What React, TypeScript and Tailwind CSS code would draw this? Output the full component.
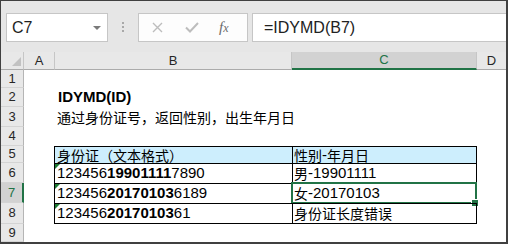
import React from "react";

const cjk = "text-[14px] font-['Noto_Sans_CJK_SC',sans-serif]";

const Zh = ({ children }: { children: React.ReactNode }) => (
  <span className={cjk}>{children}</span>
);

const ErrorMark = () => (
  <span className="absolute left-0 top-0 w-0 h-0 border-t-[5px] border-r-[5px] border-t-[#1e7b34] border-r-transparent" />
);

const Toolbar = () => (
  <div className="h-[51px] bg-[#e6e6e6] flex items-start pt-[12px] shrink-0">
    <div className="ml-[5px] w-[102px] h-[29px] border border-[#c6c6c6] bg-white flex items-center justify-between">
      <span className="pl-[5px] text-[16px] text-[#1f1f1f] leading-none">C7</span>
      <span className="mr-[6px] w-0 h-0 border-l-[4px] border-r-[4px] border-t-[4px] border-l-transparent border-r-transparent border-t-[#7a7a7a]" />
    </div>
    <div className="ml-[14px] mt-[9px] flex flex-col gap-[2px]">
      <span className="w-[2px] h-[2px] bg-[#a8a8a8]" />
      <span className="w-[2px] h-[2px] bg-[#a8a8a8]" />
      <span className="w-[2px] h-[2px] bg-[#a8a8a8]" />
    </div>
    <div className="ml-[14px] w-[110px] h-[29px] border border-[#c6c6c6] bg-[#fdfdfd] flex items-center">
      <svg className="ml-[13px]" width="11" height="11" viewBox="0 0 11 11">
        <path d="M1 1 L10 10 M10 1 L1 10" stroke="#bdbdbd" strokeWidth="1.4" fill="none" />
      </svg>
      <svg className="ml-[22px]" width="14" height="11" viewBox="0 0 14 11">
        <path d="M1 5.5 L5 9.5 L13 1" stroke="#bdbdbd" strokeWidth="2" fill="none" />
      </svg>
      <span className="ml-[20px] text-[15px] italic text-[#6b6b6b] font-['Liberation_Serif',serif] leading-none">
        f<span className="text-[12px]">x</span>
      </span>
    </div>
    <div className="ml-[4px] flex-1 h-[29px] border-t border-b border-l border-[#c6c6c6] bg-white flex items-center">
      <span className="pl-[11px] text-[16px] text-[#222] leading-none">=IDYMD(B7)</span>
    </div>
  </div>
);

const ColumnHeader = () => (
  <div className="h-[18px] flex bg-[#e8e8e8] text-[13px] text-[#262626] shrink-0">
    <div className="relative w-[23px] border-r border-b border-r-[#c6c6c6] border-b-[#ababab]">
      <span className="absolute left-[11px] top-[5px] w-0 h-0 border-b-[9px] border-l-[9px] border-b-[#c2c2c2] border-l-transparent" />
    </div>
    <div className="w-[31px] border-r border-b border-r-[#c6c6c6] border-b-[#ababab] flex items-center justify-center">A</div>
    <div className="w-[237px] border-r border-b border-r-[#c6c6c6] border-b-[#ababab] flex items-center justify-center">B</div>
    <div className="w-[185px] bg-[#d2d2d2] border-r border-b-2 border-r-[#c6c6c6] border-b-[#217346] text-[#217346] flex items-center justify-center">C</div>
    <div className="flex-1 border-b border-b-[#ababab] flex items-center justify-center">D</div>
  </div>
);

interface RowProps {
  n: number;
  h: string;
  selected?: boolean;
  b?: React.ReactNode;
  c?: React.ReactNode;
  table?: "head" | "body" | "last";
  mark?: boolean;
}

const Row = ({ n, h, selected, b, c, table, mark }: RowProps) => {
  const inTable = !!table;
  const bCls = inTable
    ? `border-l border-t border-black ${table === "last" ? "border-b" : ""} ${table === "head" ? "bg-[#cdeefd]" : ""}`
    : "border-l border-transparent";
  const cCls = inTable
    ? `border-l border-r border-t border-black ${table === "last" ? "border-b" : ""} ${table === "head" ? "bg-[#cdeefd]" : ""}`
    : "border-l border-r border-transparent";

  return (
    <div className={`${h} flex shrink-0`}>
      <div
        className={`w-[23px] flex items-center justify-center text-[13px] border-b border-b-[#d4d4d4] ${
          selected
            ? "bg-[#d2d2d2] border-r-2 border-r-[#217346] text-[#217346]"
            : "bg-[#e8e8e8] border-r border-r-[#b5b5b5] text-[#262626]"
        }`}
      >
        {n}
      </div>
      <div className="w-[30px]" />
      <div className={`relative w-[238px] flex items-center pl-[2px] whitespace-nowrap text-[15px] ${bCls}`}>
        {mark && <ErrorMark />}
        {b}
      </div>
      <div className={`relative w-[185px] flex items-center pl-[1px] whitespace-nowrap text-[15px] ${cCls}`}>
        {c}
        {selected && (
          <>
            <span className="absolute -left-[2px] -top-[2px] w-[186px] h-[22px] border-2 border-[#217346]" />
            <span className="absolute -right-[3px] -bottom-[4px] w-[6px] h-[6px] bg-[#217346] border border-white box-content" />
          </>
        )}
      </div>
      <div className="flex-1" />
    </div>
  );
};

export default function App() {
  return (
    <div className="w-[508px] h-[244px] border-t border-l border-r-2 border-b-2 border-[#404040] bg-white flex flex-col overflow-hidden text-black font-['Liberation_Sans','Noto_Sans_CJK_SC',sans-serif]">
      <Toolbar />
      <ColumnHeader />
      <Row n={1} h="h-[18px]" />
      <Row n={2} h="h-[19px]" b={<b className="pl-px">IDYMD(ID)</b>} />
      <Row n={3} h="h-[20px]" b={<Zh>通过身份证号，返回性别，出生年月日</Zh>} />
      <Row n={4} h="h-[19px]" />
      <Row n={5} h="h-[17px]" table="head" b={<Zh>身份证（文本格式）</Zh>} c={<><Zh>性别</Zh>-<Zh>年月日</Zh></>} />
      <Row
        n={6}
        h="h-[20px]"
        table="body"
        mark
        b={<>123456<b>19901111</b>7890</>}
        c={<><Zh>男</Zh>-19901111</>}
      />
      <Row
        n={7}
        h="h-[20px]"
        table="body"
        mark
        selected
        b={<>123456<b>20170103</b>6189</>}
        c={<><Zh>女</Zh>-20170103</>}
      />
      <Row
        n={8}
        h="h-[21px]"
        table="last"
        mark
        b={<>123456<b>20170103</b>61</>}
        c={<Zh>身份证长度错误</Zh>}
      />
      <Row n={9} h="h-[18px]" />
    </div>
  );
}
